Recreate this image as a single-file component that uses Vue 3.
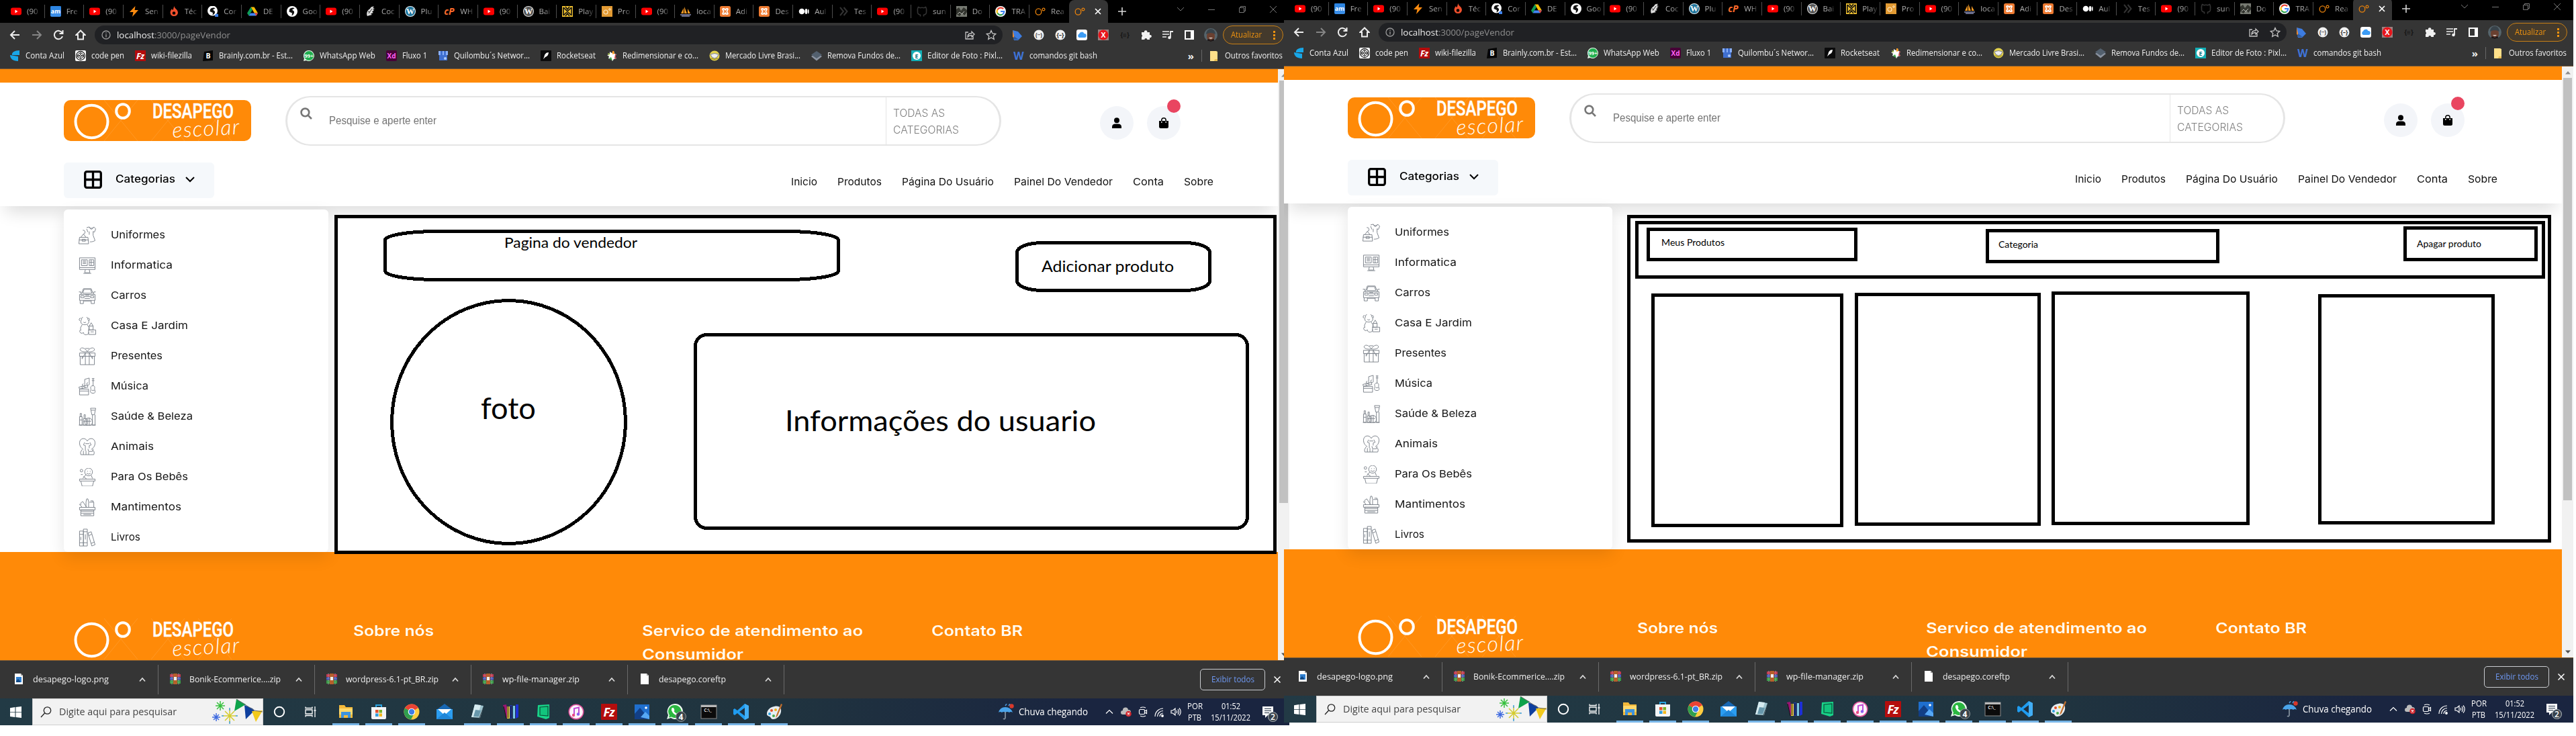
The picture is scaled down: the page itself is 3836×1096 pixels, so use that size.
<script setup>
// Stretches or narrows a label so that it fills a given width in pixels.
const vFit = {
  mounted(el, { value }) {
    const w = el.getBoundingClientRect().width
    el.style.transform = `scaleX(${value / w})`
    el.style.transformOrigin = '0 50%'
    el.style.marginRight = value - w + 'px'
  },
}

const t = (s, x, y, size, fill, extra = '') =>
  `<text x="${x}" y="${y}" font-size="${size}" fill="${fill}" text-anchor="middle" font-family="Open Sans, sans-serif" font-weight="700" ${extra}>${s}</text>`

// 16 x 16 glyphs for tabs, bookmarks and extensions
const small = {
  yt: '<rect y="2.500" width="16" height="11" rx="3" fill="#f00"/><path d="M6.500 5.500v5l4-2.500z" fill="#fff"/>',
  am: '<rect width="16" height="16" rx="2" fill="#3a8ee8"/><path d="M0 0h16v4l-16 9z" fill="#1f7bdb" opacity=".5"/>' + t('am', 8, 11, 9, '#fff'),
  bolt: '<path d="M9.500 0L1 9h5.500L5 16l9-10H8.500z" fill="#ff8c10"/>',
  flame: '<path d="M8.500 0c0 4 5.500 4.500 5.500 10a5.800 5.800 0 0 1-11.500 0c0-3 1.500-4.500 2.500-6 .3 1.200.8 1.800 1.500 2C7.500 4 7.500 2 8.500 0z" fill="#f0502d"/><circle cx="8" cy="10.500" r="2.300" fill="#000"/>',
  globe: '<circle cx="8" cy="8" r="8" fill="#fff"/><path d="M4 5c2-3 6-3 7.500-1.500L8 5.500l3 2.500c.5 3-1 5-3.500 6.500l.5-4-4.500-2z" fill="#111"/>',
  globeDot: '<circle cx="7.500" cy="7" r="7.500" fill="#fff"/><path d="M4 5c2-3 6-3 7.500-1.500L8 5.500l3 2.500c.5 3-1 4-3.500 5.500l.5-3.500-4.500-2z" fill="#111"/><circle cx="14" cy="14.500" r="3" fill="#3f82ec"/>',
  drive: '<path d="M5.500 1.500h5l5.500 9h-5.200z" fill="#fbbc04"/><path d="M5.500 1.500L0 10.500l2.500 4L8 5.600z" fill="#0f9d58"/><path d="M2.500 14.500h11l2.500-4H5z" fill="#4285f4"/><path d="M13.500 14.500l2.500-4h-5z" fill="#ea4335"/>',
  feather: '<path d="M3 15C1 11 3 6 7 4c1-3 4-4 6-3l-2 2 3 1-3 1.500 2 1-3 2 2 1.500-4 1.500 2 1.500-4 1z" fill="#ddd"/><path d="M5 11l5-7M4 8l3 1" stroke="#333"/>',
  wpBlue: '<circle cx="8" cy="8" r="8" fill="#e8f4fa"/><circle cx="8" cy="8" r="7" fill="#21759b"/>' + t('W', 8, 12.3, 12, '#fff', 'style="font-family:Liberation Serif,serif"'),
  wpGrey: '<circle cx="8" cy="8" r="8" fill="#e6e6e6"/><circle cx="8" cy="8" r="7" fill="#555"/>' + t('W', 8, 12.3, 12, '#fff', 'style="font-family:Liberation Serif,serif"'),
  cp: t('cP', 8, 13, 14, '#ff6c2c', 'font-style="italic"'),
  play: '<rect width="16" height="16" fill="#f2c230"/><path d="M2 2l12 12M14 2L2 14M2 2v12M14 2v12M5 1l3 4 3-4M5 15l3-4 3 4" stroke="#111" stroke-width="1.600" fill="none"/>',
  proBox: '<rect width="16" height="16" fill="#e29a33"/><circle cx="6" cy="9" r="3" stroke="#ffe7c2" stroke-width="1.200" fill="none"/><circle cx="12" cy="5" r="1.300" stroke="#ffe7c2" fill="none"/>',
  pma: '<path d="M1 11L5 3v8zM6 11V1l4 10zM11 11V4l4 7z" fill="#f59a23"/><path d="M0 13h16M2 15h12" stroke="#8b8fb5" stroke-width="1.500"/>',
  xampp: '<rect width="16" height="16" rx="2.500" fill="#ee7b32"/><path d="M4 4.500c0-1 3-1 4 1 1-2 4-2 4-1s-1.500 1.500-1.500 3.500S12 10.500 12 11.500s-3 1-4-1c-1 2-4 2-4 1s1.500-1.500 1.500-3.500S4 5.500 4 4.500z" stroke="#fff" stroke-width="1.700" fill="none"/>',
  medium: '<ellipse cx="5" cy="8" rx="4.300" ry="4.300" fill="#fff"/><ellipse cx="11.500" cy="8" rx="1.900" ry="4" fill="#fff"/><ellipse cx="14.800" cy="8" rx=".8" ry="3.600" fill="#fff"/>',
  chev: '<path d="M3 2l5 6-5 6M8.500 2l5 6-5 6" stroke="#333" stroke-width="2" fill="none"/>',
  github: '<path d="M5.500 15.500c0-1 .2-2-.2-2.500C2.500 13 1 11 1.500 7.500 1 5 2 2 2.500 1.500L5 2.700q3-.8 6 0l2.500-1.200C14 2 15 5 14.500 7.500c.5 3.500-1 5.500-3.800 5.500-.4.500-.2 1.500-.2 2.500" stroke="#333" stroke-width="1.600" fill="none"/>',
  photo: '<rect width="16" height="16" fill="#777a72"/><path d="M0 5l4-3 3 5 4-5 5 4v3l-4 5-3-4-4 5-5-3z" fill="#33352f"/><path d="M2 12l3-3 3 3 4-4" stroke="#b9bbb4" fill="none"/>',
  google: '<circle cx="8" cy="8" r="8" fill="#fff"/><path d="M12.200 4.300A5.500 5.500 0 0 0 3.300 5.500" stroke="#ea4335" stroke-width="2.200" fill="none"/><path d="M3.300 5.300a5.500 5.500 0 0 0 0 5.400" stroke="#fbbc04" stroke-width="2.200" fill="none"/><path d="M3.300 10.500A5.400 5.400 0 0 0 11 12.400" stroke="#34a853" stroke-width="2.200" fill="none"/><path d="M8 8h5.300c0 2-.9 3.500-2.300 4.500" stroke="#4285f4" stroke-width="2.200" fill="none"/>',
  rings: '<ellipse cx="5.500" cy="8.500" rx="4.300" ry="4.600" stroke="#e8820c" stroke-width="1.300" fill="none"/><circle cx="13" cy="5" r="1.900" stroke="#e8820c" stroke-width="1.200" fill="none"/>',
  azul: '<path d="M15 0v7H4C3 3 8 0 15 0zM1 7c0 5 4 9 12 9V9z" fill="#18a7e8"/>',
  codepen: '<rect width="16" height="16" rx="2" fill="#fff"/><circle cx="8" cy="8" r="6.500" fill="none" stroke="#222" stroke-width="1.300"/><path d="M8 3.500l4.500 3v3l-4.500 3-4.500-3v-3zM3.500 6.500l4.500 3 4.500-3M3.500 9.500l4.500-3 4.500 3M8 3.500v3M8 9.500v3" fill="none" stroke="#222"/>',
  fz: '<rect width="16" height="16" fill="#b30b0b"/>' + t('Fz', 8, 13, 12.5, '#fff', 'font-style="italic" textLength="12"'),
  brainly: '<path d="M2 2l13-2v15L0 16z" fill="#050505"/>' + t('B', 8, 12, 10.5, '#fff'),
  wa: '<path d="M8 0a8 8 0 1 1-4 15L0 16l1-4A8 8 0 0 1 8 0z" fill="#e4f5e8"/><circle cx="8" cy="8" r="6.900" fill="#1fae4e"/>' + t('99+', 8, 11, 7.5, '#fff'),
  xd: '<rect width="16" height="16" rx="2" fill="#470137"/>' + t('Xd', 8, 12, 10, '#ff61f6'),
  store: '<path d="M1 1h14v6H1z" fill="#8ab0f8"/><path d="M4 1h3v6H4zM9 1h3v6H9zM2 7h12v8H2z" fill="#3f6fd0"/><circle cx="11" cy="12" r="2" fill="#aecbfa"/>',
  rocket: '<rect width="16" height="16" rx="1" fill="#0a0a0b"/><path d="M12 3c-4 0-6 3-6.500 6L4 13l3-3c3-1 4.500-3 5-7z" fill="#fff"/>',
  pin: '<path d="M5 2l3 2 3-3 1 4 3 1-2 3 2 3-4 1-2 3-2-3-4-1 1-3-3-2 4-1z" fill="#fff"/><path d="M9 1l2 0 1 4-3 1z" fill="#ff9a1f"/><path d="M13 6l2 0-2 3 2 3-3 0z" fill="#da3640"/><path d="M4 12l3-2 2 5-2-1z" fill="#3bab46"/><path d="M2 4l3 1-1 3z" fill="#b7d94a"/>',
  ml: '<circle cx="8" cy="8" r="7.500" fill="#e2d14d"/><path d="M2 6q6-3 12 0l-2 4-4 2-4-2z" fill="#eee" stroke="#5f6688" stroke-width=".8"/><path d="M3 12q5 3 10 0" stroke="#8b7d15" fill="none"/>',
  layers: '<path d="M0 9l8 6.500L16 9l-3-2H3z" fill="#8b93a0"/><path d="M8 1l8 5.500L8 12 0 6.500z" fill="#53606e"/>',
  pixlr: '<rect width="16" height="16" fill="#13aeb5"/><circle cx="8" cy="8" r="6" fill="#fff"/>' + t('E', 8, 11.5, 9, '#0c7479'),
  word: t('W', 8, 14, 16, '#3f74d8'),
  folder: '<path d="M2 1h9l2 1v14H2z" fill="#ffe08a"/><path d="M9 13h4v3H8z" fill="#e8bd53"/>',
  tag: '<path d="M1 1l8 2 6 7-6 6H3z" fill="#3d7ce0"/><path d="M1 1l3 12-3-2z" fill="#ef8a2a"/><path d="M3 10l-1 5h8z" fill="#315c9e"/>',
  json: '<circle cx="8" cy="8" r="7.500" fill="#f2f2f2"/>' + t('(··)', 8, 11, 8, '#333'),
  json2: '<circle cx="8" cy="8" r="7.500" fill="#f2f2f2"/>' + t('{–}', 8, 11, 8.5, '#222'),
  cloud: '<rect width="16" height="16" rx="3" fill="#fff"/><path d="M4 12a3 3 0 0 1 0-5.500A4 4 0 0 1 11.500 6 3 3 0 0 1 12 12z" fill="#3c9cf5"/>',
  redx: '<rect width="16" height="16" fill="#9b8080"/><circle cx="8" cy="8" r="7.500" fill="#e8151b"/>' + t('X', 8, 12, 10.5, '#fff'),
  braces: t('{≡}', 8, 12, 10, '#151515'),
  puzzle: '<path d="M1 4h4a2.200 2.200 0 1 1 4.300 0H13v4a2.200 2.200 0 1 1 0 4.200V15H9.300a2 2 0 0 0-4 0H1v-4a2 2 0 0 0 0-3.500z" fill="#f1f1f1"/>',
  queue: '<path d="M0 3h10M0 7h10M0 11h6" stroke="#eee" stroke-width="1.700"/><path d="M12 12V3h4" stroke="#eee" stroke-width="1.800" fill="none"/><circle cx="10.500" cy="12" r="2.300" fill="#eee"/>',
  panel: '<rect x="2" y="2" width="12" height="12" fill="none" stroke="#fff" stroke-width="2"/><path d="M10 2h4v12h-4z" fill="#fff"/>',
}

// 24 x 24 taskbar glyphs
const large = {
  explorer: '<path d="M2 2h8l2 3h10v16H2z" fill="#f3b93a"/><path d="M2 7h20v9H2z" fill="#ffd86b"/><path d="M5 12h14v9h-4v-4H9v4H5z" fill="#3d93dd"/>',
  shop: '<path d="M8 6V2h8v4" fill="none" stroke="#2aa3e0" stroke-width="2"/><path d="M1 5h22v16q0 2-2 2H3q-2 0-2-2z" fill="#f2f4f6"/><path d="M7 9h4.500v4.500H7z" fill="#e5502a"/><path d="M12.500 9H17v4.500h-4.500z" fill="#7ab52a"/><path d="M7 14.500h4.500V19H7z" fill="#2f9fe0"/><path d="M12.500 14.500H17V19h-4.500z" fill="#f5b81f"/>',
  chrome: '<circle cx="12" cy="12" r="11.500" fill="#ffcd40"/><path d="M12 12L2 6.500A11.500 11.500 0 0 1 22 6z" fill="#ea4335"/><path d="M12 12L2 6.500A11.500 11.500 0 0 0 11 23.400L16 14z" fill="#2f9e4f"/><circle cx="12" cy="12" r="5.300" fill="#fff"/><circle cx="12" cy="12" r="4.200" fill="#3f7de8"/>',
  mail: '<path d="M0 9L12 0l12 9z" fill="#1767b3"/><path d="M0 8h24v15H0z" fill="#2b9df0"/><path d="M2 8h20l-10 9z" fill="#fff"/><path d="M0 23l12-10 12 10z" fill="#1f86d8"/>',
  note: '<path d="M8 1l13 2-5 18L3 20z" fill="#9fc4cf"/><path d="M8 1l9 1-5 17-9 1z" fill="#d6ebf0"/><path d="M9 9l8 1-3 9-8 0z" fill="#6797ab"/><path d="M21 3l-5 18-2 1z" fill="#4a5a62"/>',
  books: '<path d="M1 2l5-1 3 20-3 1z" fill="#9b1574"/><path d="M7 4h4v18H7z" fill="#e7c93b"/><path d="M11 2h4v20h-4z" fill="#223b9c"/><path d="M16 3h3v19h-3z" fill="#7cc8e8"/><path d="M20 1h4v19l-4 2z" fill="#1d2fd8"/><path d="M2 4l4 18M8.500 4v17M13 3v18" stroke="#111" stroke-width="1"/>',
  green: '<path d="M4 2l17-1v20l-5 2-13-4z" fill="#19d389"/><path d="M7 5l12-1v14l-12-1z" fill="#12c47d" stroke="#0a4d38" stroke-width="1.200"/>',
  itunes: '<circle cx="12" cy="12" r="11.500" fill="#e2559e"/><circle cx="12" cy="12" r="10" fill="#fbf3fa"/><path d="M9 17V7l7-1.500V15" stroke="#c24bd4" stroke-width="2" fill="none"/><circle cx="8" cy="17" r="2.200" fill="#ea4a82"/><circle cx="15" cy="15.500" r="2.200" fill="#8a5cf0"/>',
  fz: '<rect width="24" height="24" rx="1" fill="#b40d0d"/>' + t('Fz', 12, 19, 18, '#fff', 'font-style="italic" textLength="17"'),
  photos: '<path d="M1 1h22v22H1z" fill="#1f6fce"/><path d="M1 15l8-9 14 17H1z" fill="#123f86"/><path d="M10 20l7-8 6 6v5z" fill="#56a8f5"/><circle cx="18" cy="6" r="1.800" fill="#fff"/>',
  wa: '<path d="M12 0a11.500 11.500 0 1 1-6 21L0 23l2-6A11.500 11.500 0 0 1 12 0z" fill="#eefaf1"/><path d="M12 2a9.500 9.500 0 1 1-5 17.500L3 20.500 4 17A9.500 9.500 0 0 1 12 2z" fill="#2bb741"/><path d="M8 6l2 0 1.500 3.500-1 1.500q1.500 2.500 4 3.500l1.500-1.500 3 1.500q0 3-3 3Q10 17 7 10q-.5-3 1-4z" fill="#fff"/><circle cx="21" cy="19" r="7.500" fill="#3b454b" stroke="#8b9398"/>' + t('4', 21, 23.5, 12, '#fff'),
  cmd: '<rect x="1" y="2" width="23" height="20" fill="#0b0b0b" stroke="#8a8a8a"/><path d="M1 2h23v3H1z" fill="#b9b9b9"/>' + t('C:\\_', 11, 12, 6.5, '#ddd'),
  vscode: '<path d="M17 0l6 3v18l-6 3-11-10-4 3-2-1.500V8.500L2 7l4 3z" fill="#1f9cf0"/><path d="M17 6v12l-8-6z" fill="#1e2f3f"/><path d="M17 0l6 3v18l-6 3z" fill="#42aef5"/>',
  paint: '<path d="M12 4c8-2 11 3 10 8-1 6-6 11-12 11-3 0-3-3-5-4s-4-1-4-4C1 9 6 5 12 4z" fill="#e6edf2"/><circle cx="8" cy="10" r="2" fill="#e5502a"/><circle cx="5" cy="15" r="2" fill="#2c9fe0"/><circle cx="14" cy="9" r="2" fill="#f1b31d"/><circle cx="11" cy="18" r="2" fill="#47a94a"/><path d="M22 0l2 1-7 17-3 3 1-4z" fill="#c2702e"/>',
}

// 28 x 28 line drawings of the category list
const cats = [
  { n: 'Uniformes', w: 81, d: 'M13 2l4-1 2 2h3l2-2 3 3-2 5-2-1v6l3 8c-3 2-6 2-8 2M15 9l-2-5M17 8v5M17 1q3 7 7 0M7 6a3 3 0 1 1 1 6L4 17M8 12l4 5M2 17h13l1 10H1zM1 21h15M6 20h5v3H6z' },
  { n: 'Informatica', w: 92, d: 'M2 2h24v18H2zM2 17h24M11 20l-1 5h8l-1-5M8 26h12M5 5h9v9H5zM7 7h5M7 9h5M7 11h5M17 5h7v9h-7zM20 5v9M17 9h7' },
  { n: 'Carros', w: 53, d: 'M5 11l3-8h12l3 8M7 10l2-6h10l2 6zM2 12h24v9H2zM1 8h3v3M27 8h-3v3M4 14h5v3H4zM19 14h5v3h-5zM10 15h8M10 18h8M3 21v5h5v-5M20 21v5h5v-5M8 22h12M11 13h6' },
  { n: 'Casa E Jardim', w: 115, d: 'M5 4a4 4 0 1 1 10 0c3 4 1 8-5 8s-7-4-5-8M4 2a2 2 0 1 0-1 4M15 2a2 2 0 1 1 1 4M8 8q2 2 4 0M6 12q-4 5-2 9M14 12q4 4 2 9M3 20a3 3 0 1 0 5 4 3 3 0 1 0 8-1M20 9l3 5h-6zM17 14h6v6h-6zM16 20h11v7H16zM19 23h5' },
  { n: 'Presentes', w: 77, d: 'M2 9h24v5H2zM3 14h22v13H3zM11 9v18M17 9v18M14 7C10 0 4 0 3 3s5 5 11 4c6 1 12-1 11-4s-7-3-11 4M11 9l-5 9 0-4M17 9l5 9 0-4M11 2h6' },
  { n: 'Música', w: 56, d: 'M10 11V3l7-2v8M10 11a2 2 0 1 1-2-1M17 9a2 2 0 1 1-2-1M23 1v12M21 2h4M21 5h4M21 13c-4 3 0 4-2 8s9 5 7 0 1-6-2-8zM21 20h4M2 18h14v9H2zM2 18l-1-3 13-3 1 3zM5 14l2 3M9 13l2 3M2 21h14' },
  { n: 'Saúde & Beleza', w: 122, d: 'M2 14h4v13H2zM3 14V9h2v5M8 17h5v10H8zM9 17v-6h2v6M19 1h8l-2 10h-4zM20 4h6M22 11v16h4V11M10 22a6 6 0 1 1 12 0 6 6 0 1 1-12 0M12 21h8M14 17v9M17 16v11M1 27h26M2 19h4M8 21h5' },
  { n: 'Animais', w: 64, d: 'M14 5C11-1 2 0 2 8c0 5 3 8 6 10M14 5c3-6 12-5 12 3 0 5-3 8-6 10M10 7l-2 4 3 1v8M18 7l2 4-3 1v4M11 9h6M6 18q-4 5-2 8h20q2-5-2-7M15 17l1 4h6l1-4M8 20v6M12 20v6M16 22v4' },
  { n: 'Para Os Bebês', w: 115, d: 'M10 6a6 6 0 1 1 12 0 6 6 0 1 1-12 0M13 8q3 3 6 0M14 5h1M18 5h1M12 10l-5 6M20 11l2 5M3 4a2 2 0 1 1 4 0 2 2 0 1 1-4 0M4 10h3M2 17h24v3H2zM4 20l2 8h16l2-8M8 13l5 4' },
  { n: 'Mantimentos', w: 105, d: 'M2 14h24v4H2zM4 18h20v9H4zM4 20h20M4 23h20M12 14V6l1-5h2l1 5v8M17 6h7v8M19 4h4v2M3 8l4-3 6 9M2 10l3-1M6 14l-4-5M8 25h12' },
  { n: 'Livros', w: 44, d: 'M2 4h6v23H2zM8 1h6v26H8zM15 7l5-2 6 20-5 2zM2 9h6M2 22h6M8 5h6M8 22h6M16 11l5-2M20 23l5-2M4 13v5M11 9v8' },
]

const tabs = [
  ['yt', '(90'], ['am', 'Fre'], ['yt', '(90'], ['bolt', 'Sen'], ['flame', 'Téc'], ['globeDot', 'Cor'], ['drive', 'DE'],
  ['globe', 'Goo'], ['yt', '(90'], ['feather', 'Coc'], ['wpBlue', 'Plu'], ['cp', 'WH'], ['yt', '(90'], ['wpGrey', 'Bai'],
  ['play', 'Play'], ['proBox', 'Pro'], ['yt', '(90'], ['pma', 'loca'], ['xampp', 'Adi'], ['xampp', 'Des'], ['medium', 'Aul'],
  ['chev', 'Tes'], ['yt', '(90'], ['github', 'sun'], ['photo', 'Do'], ['google', 'TRA'], ['rings', 'Rea'],
]
const marks = [
  ['azul', 'Conta Azul', 58], ['codepen', 'code pen', 49], ['fz', 'wiki-filezilla', 61], ['brainly', 'Brainly.com.br - Est...', 110],
  ['wa', 'WhatsApp Web', 83], ['xd', 'Fluxo 1', 37], ['store', 'Quilombu´s Networ...', 113], ['rocket', 'Rocketseat', 58],
  ['pin', 'Redimensionar e co...', 113], ['ml', 'Mercado Livre Brasi...', 112], ['layers', 'Remova Fundos de...', 109],
  ['pixlr', 'Editor de Foto : Pixl...', 112], ['word', 'comandos git bash', 101],
]
const exts = ['tag', 'json', 'json2', 'cloud', 'redx', 'braces', 'puzzle', 'queue', 'panel']
const nav = [['Inicio', 39], ['Produtos', 66], ['Página Do Usuário', 137], ['Painel Do Vendedor', 147], ['Conta', 46], ['Sobre', 44]]
const files = [
  ['img', 'desapego-logo.png', 113], ['rar', 'Bonik-Ecommerice....zip', 136], ['rar', 'wordpress-6.1-pt_BR.zip', 138],
  ['rar', 'wp-file-manager.zip', 115], ['doc', 'desapego.coreftp', 100],
]
const apps = ['explorer', 'shop', 'chrome', 'mail', 'note', 'books', 'green', 'itunes', 'fz', 'photos', 'wa', 'cmd', 'vscode', 'paint']

// Wireframe shapes: x, y, width, height, rx, ry
const screens = [
  {
    boxes: [[498, 320, 1403, 505, 0, 0], [571, 342, 680, 77, 78, 13], [581, 445, 353, 367, 176, 183], [1512, 359, 292, 76, 38, 14], [1033, 496, 827, 293, 17, 17]],
    labels: [['Pagina do vendedor', 751, 369, 198, 20.5], ['foto', 716, 624, 82, 44], ['Adicionar produto', 1551, 405, 197, 23.5], ['Informações do usuario', 1169, 642, 463, 42]],
  },
  {
    boxes: [[511, 324, 1376, 488, 0, 0], [523, 333, 1355, 86, 0, 0], [540, 343, 314, 50, 0, 0], [1045, 345, 348, 51, 0, 0], [1667, 341, 200, 52, 0, 0],
      [547, 441, 286, 348, 0, 0], [850, 440, 277, 347, 0, 0], [1143, 438, 295, 348, 0, 0], [1540, 442, 263, 343, 0, 0]],
    labels: [['Meus Produtos', 562, 370, 94, 14], ['Categoria', 1064, 373, 59, 14], ['Apagar produto', 1687, 372, 96, 14]],
  },
]
</script>

<template>
  <div class="desk">
    <section v-for="(s, k) in screens" :key="k" class="shot" :class="{ second: k === 1 }">
      <div class="frame">
        <div class="tabs">
          <div v-for="(b, i) in tabs" :key="i" class="tab" :class="{ last: i === tabs.length - 1 }">
            <svg class="i16" viewBox="0 0 16 16" v-html="small[b[0]]" /><span>{{ b[1] }}</span>
          </div>
          <div class="tab on">
            <svg class="i16" viewBox="0 0 16 16" v-html="small.rings" />
            <svg class="x" viewBox="0 0 10 10"><path d="M1 1l8 8M9 1L1 9" stroke="#fff" stroke-width="1.700" /></svg>
          </div>
          <svg class="plus" viewBox="0 0 12 12"><path d="M6 0v12M0 6h12" stroke="#d8d8d8" stroke-width="1.600" /></svg>
          <div class="ctl">
            <svg viewBox="0 0 12 12"><path d="M1 3l5 5 5-5" /></svg>
            <svg viewBox="0 0 12 12"><path d="M1 6.500h10" /></svg>
            <svg viewBox="0 0 12 12"><path d="M1.500 3.500h7v7h-7zM3.500 3.500v-2h7v7h-2" /></svg>
            <svg viewBox="0 0 12 12"><path d="M1 1l10 10M11 1L1 11" /></svg>
          </div>
        </div>

        <div class="bar">
          <div class="go">
            <svg viewBox="0 0 16 16"><path d="M15 8H2M8 2L2 8l6 6" /></svg>
            <svg class="dim" viewBox="0 0 16 16"><path d="M1 8h13M8 2l6 6-6 6" /></svg>
            <svg viewBox="0 0 16 16"><path d="M13.500 5A6.200 6.200 0 1 0 14 10M14.500 1v5h-5" /></svg>
            <svg viewBox="0 0 16 16"><path d="M8 1.500L1.500 8H4v6.500h8V8h2.500z" /></svg>
          </div>
          <div class="omni">
            <svg class="info" viewBox="0 0 14 14"><circle cx="7" cy="7" r="6" /><path d="M7 6v4.500M7 3.300v1.500" /></svg>
            <span v-fit="56" class="host">localhost</span><span v-fit="113" class="path">:3000/pageVendor</span>
            <svg class="share" viewBox="0 0 16 16"><path d="M6 4H2v10h11v-4M5 11c0-4 3-5.500 6-5.500V3l4 4-4 4V8.500C8.500 8.500 6.500 9 5 11z" /></svg>
            <svg class="star" viewBox="0 0 16 16"><path d="M8 1.500l2 4.500 4.700.5-3.500 3.200 1 4.800L8 12l-4.200 2.500 1-4.800L1.300 6.500 6 6z" /></svg>
          </div>
          <svg v-for="e in exts" :key="e" class="i16 ext" viewBox="0 0 16 16" v-html="small[e]" />
          <svg class="face" viewBox="0 0 20 20"><defs><clipPath :id="'f' + k"><circle cx="10" cy="10" r="10" /></clipPath></defs><g :clip-path="`url(#f${k})`"><rect width="20" height="20" fill="#56646b" /><ellipse cx="10" cy="12" rx="6" ry="8" fill="#6a4030" /><path d="M3 9Q4 1 10 1t7 8q-7-4-14 0z" fill="#39434a" /><path d="M7 14q3 3 6 0z" fill="#e8e0dc" /><path d="M3 20l3-4 4 2 4-2 3 4z" fill="#1d1718" /></g></svg>
          <div class="upd"><span v-fit="46">Atualizar</span><i /></div>
        </div>

        <div class="marks">
          <div v-for="m in marks" :key="m[1]" class="mark"><svg class="i16" viewBox="0 0 16 16" v-html="small[m[0]]" /><span v-fit="m[2]">{{ m[1] }}</span></div>
          <b class="more">»</b>
          <div class="mark other"><svg class="i16" viewBox="0 0 16 16" v-html="small.folder" /><span v-fit="86">Outros favoritos</span></div>
        </div>

        <div class="view">
          <div class="page">
            <div class="stripe" />
            <header>
              <div class="row1">
                <svg class="logo" viewBox="0 0 279 61">
                  <rect width="279" height="61" rx="10" fill="#ff8a08" />
                  <g class="wm"><path d="M60 0l50 61M110 0L60 61M130 0l50 61M180 0l-50 61M200 0l50 61M250 0l-50 61" /></g>
                  <ellipse cx="41.500" cy="32" rx="24" ry="24.300" fill="none" stroke="#fff" stroke-width="4" />
                  <ellipse cx="88" cy="16.500" rx="9.800" ry="10.300" fill="none" stroke="#fff" stroke-width="4" />
                  <text x="132" y="27" class="lt" textLength="121" lengthAdjust="spacingAndGlyphs">DESAPEGO</text>
                  <text x="162" y="56" class="ls" textLength="100" transform="rotate(-3 162 56)">escolar</text>
                </svg>
                <div class="search">
                  <svg class="lens" viewBox="0 0 17 17"><circle cx="7" cy="7" r="5.500" /><path d="M11 11l5 5" /></svg>
                  <span v-fit="160" class="ph">Pesquise e aperte enter</span>
                  <div class="all"><span v-fit="77">TODAS AS</span><span v-fit="98">CATEGORIAS</span></div>
                </div>
                <div class="disc"><svg viewBox="0 0 16 16"><circle cx="8" cy="4.200" r="4" /><path d="M1 16v-2q0-4.500 5-4.500h4q5 0 5 4.500v2z" /></svg></div>
                <div class="disc"><svg viewBox="0 0 16 16"><path d="M1 5h14v8.500q0 2.500-2.500 2.500h-9Q1 16 1 13.500z" /><path d="M4.800 8V4q0-3.200 3.200-3.200T11.200 4v4" fill="none" stroke="#000" stroke-width="1.500" /><path d="M4.800 6v1.800M11.200 6v1.800" stroke="#fff" stroke-width="1.500" /></svg><em /></div>
              </div>
              <div class="row2">
                <div class="cat">
                  <svg viewBox="0 0 27 27"><rect x="1.700" y="1.700" width="23.600" height="23.600" rx="2.500" /><path d="M13.500 2v23M2 13.500h23" /></svg>
                  <span v-fit="89">Categorias</span>
                  <svg class="dn" viewBox="0 0 14 9"><path d="M1 1l6 6 6-6" /></svg>
                </div>
                <nav><span v-for="n in nav" :key="n[0]" v-fit="n[1]">{{ n[0] }}</span></nav>
              </div>
            </header>
            <div class="body">
              <aside>
                <div v-for="c in cats" :key="c.n" class="c"><svg viewBox="0 0 28 28"><path :d="c.d" /></svg><span v-fit="c.w">{{ c.n }}</span></div>
              </aside>
            </div>
            <footer>
              <svg class="logo" viewBox="0 0 279 61">
                <g class="wm"><path d="M60 0l50 61M110 0L60 61M130 0l50 61M180 0l-50 61M200 0l50 61M250 0l-50 61" /></g>
                <ellipse cx="41.500" cy="32" rx="24" ry="24.300" fill="none" stroke="#fff" stroke-width="4" />
                <ellipse cx="88" cy="16.500" rx="9.800" ry="10.300" fill="none" stroke="#fff" stroke-width="4" />
                <text x="132" y="27" class="lt" textLength="121" lengthAdjust="spacingAndGlyphs">DESAPEGO</text>
                <text x="162" y="56" class="ls" textLength="100" transform="rotate(-3 162 56)">escolar</text>
              </svg>
              <h3 class="h1"><span v-fit="120">Sobre nós</span></h3>
              <h3 class="h2"><span v-fit="329">Servico de atendimento ao</span><span v-fit="151">Consumidor</span></h3>
              <h3><span v-fit="136">Contato BR</span></h3>
            </footer>
          </div>
          <div class="scroll">
            <svg viewBox="0 0 8 6"><path d="M0 5.500L4 1l4 4.500z" fill="#8b8b8b" /></svg><div class="thumb" />
            <svg viewBox="0 0 8 6"><path d="M0 .5L4 5 8 .5z" fill="#505050" /></svg>
          </div>
        </div>

        <div class="dl">
          <div v-for="f in files" :key="f[1]" class="file">
            <svg v-if="f[0] === 'rar'" viewBox="0 0 16 16"><path d="M0 1h16v4H0z" fill="#c23a50" /><path d="M0 5.500h16v4H0z" fill="#4d5fc0" /><path d="M0 10h16v5H0z" fill="#3b9a48" /><path d="M5 0h6v16H5z" fill="#b5602b" /><path d="M6 5h4v5H6z" fill="#eee" /><path d="M3 0v16M13 0v16" stroke="#ccc" stroke-dasharray="1 1.500" /></svg>
            <svg v-else viewBox="0 0 16 16"><path d="M2 0h9l3 3v13H2z" fill="#fff" /><path d="M11 0l3 3h-3z" fill="#999" /><path v-if="f[0] === 'img'" d="M4 5h8v8H4z" fill="#2f7fd0" /><path v-if="f[0] === 'img'" d="M4 11l3-3 3 3v2H4z" fill="#124a86" /></svg>
            <span v-fit="f[2]">{{ f[1] }}</span>
            <svg class="up" viewBox="0 0 10 8"><path d="M1 6.500L5 2l4 4.500" /></svg>
          </div>
          <div class="show"><span v-fit="64">Exibir todos</span></div>
          <svg class="cl" viewBox="0 0 10 10"><path d="M.5.500l9 9M9.500.500l-9 9" /></svg>
        </div>

        <div class="task">
          <svg class="win" viewBox="0 0 16 16"><path d="M0 2l7-1v6.700H0zM8 1l8-1v7.700H8zM0 8.500h7V15l-7-1zM8 8.500h8V16l-8-1z" fill="#fff" /></svg>
          <div class="find">
            <svg class="fl" viewBox="0 0 17 17"><circle cx="10.500" cy="6" r="5.200" /><path d="M6.500 10L1 16" /></svg>
            <span v-fit="175">Digite aqui para pesquisar</span>
            <svg class="party" viewBox="0 0 77 38"><g stroke-width="1.500" fill="none"><path d="M14 3v14M7 10h14M9 5l10 10M19 5L9 15" stroke="#37c13e" /><path d="M8 21v12M2 27h12M4 23l8 8M12 23l-8 8" stroke="#3f6be0" /><path d="M28 15v20M18 25h20M21 18l14 14M35 18L21 32" stroke="#d5cc2e" /><path d="M28 13v4M28 33v4M16 25h3M37 25h3" stroke="#3f9ed8" /></g><path d="M38 0l14 8-17 10z" fill="#0da34b" /><path d="M50 9l12 5 3 3-13 13z" fill="#0e3f9e" /><path d="M61 18l16-1-10 17z" fill="#f2c91c" /><path d="M38 0l14 9 13 8 12 2" stroke="#666" fill="none" /></svg>
          </div>
          <svg class="cort" viewBox="0 0 18 18"><circle cx="9" cy="9" r="7.200" fill="none" stroke="#fff" stroke-width="2" /></svg>
          <svg class="tv" viewBox="0 0 18 18"><path d="M1 1.500v2h10v-2M1 16.500v-2h10v2M1 6h10v6H1zM15 1v16M13.500 7h3" fill="none" stroke="#fff" stroke-width="1.300" /></svg>
          <div v-for="a in apps" :key="a" class="app" :class="{ idle: a === 'mail' }"><svg viewBox="0 0 24 24" v-html="large[a]" /></div>
          <div class="tray">
            <svg class="um" viewBox="0 0 24 24"><path d="M1 13Q3 5 11 5t11 8q-3-2-5 0-3-2-6 0-3-2-5 0-3-2-5 0z" fill="#4aa4ea" /><path d="M11 12v9q-1 3-3 1" stroke="#8d9aa5" stroke-width="1.600" fill="none" /><path d="M11 3l2-3M16 3l2-3" stroke="#4a9be0" stroke-width="1.500" /><circle cx="20.500" cy="3.500" r="3.200" fill="#d8392b" /></svg>
            <span v-fit="103" class="ch">Chuva chegando</span>
            <svg class="w12" viewBox="0 0 12 12"><path d="M1 8.500L6 3.500l5 5" /></svg>
            <svg class="w16" viewBox="0 0 16 16"><path d="M3 12a3 3 0 0 1 0-6 4 4 0 0 1 8-1 3.500 3.500 0 0 1 1 7z" fill="#bbb" stroke="none" /><circle cx="11.500" cy="11" r="4.300" fill="#d3282f" stroke="none" /><path d="M10 9.500l3 3M13 9.500l-3 3" stroke="#fff" /></svg>
            <svg class="w16" viewBox="0 0 16 16"><rect x="2.500" y="4.500" width="8" height="7" rx="1.500" /><path d="M10.500 7l3-1.500v5l-3-1.500M4 2q4-2 8 0M4 14q4 2 8 0" /></svg>
            <svg class="w16" viewBox="0 0 16 16"><path d="M2 15A12 12 0 0 1 14 3M5.500 15A8.500 8.500 0 0 1 14 6.500M9 15a5 5 0 0 1 5-5" /><circle cx="13" cy="14" r="1.300" fill="#fff" /></svg>
            <svg class="w16" viewBox="0 0 16 16"><path d="M1 6h2.500L7 3v10L3.500 10H1zM9 6q1.500 2 0 4M11 4q3 4 0 8M13 2.500q4.500 5.500 0 11" /></svg>
            <div class="two lang"><span v-fit="23">POR</span><span v-fit="20">PTB</span></div>
            <div class="two date"><span v-fit="28">01:52</span><span v-fit="59">15/11/2022</span></div>
            <svg class="nt" viewBox="0 0 26 26"><path d="M1 2h16v13H9l-4 4v-4H1z" fill="#fff" stroke="none" /><path d="M4 5.500h10M4 8.500h10M4 11.500h7" stroke="#1b2b3f" /><circle cx="16.500" cy="17.500" r="7" fill="#39424c" stroke="#9aa2a9" /><text x="16.500" y="22" text-anchor="middle" class="nn">2</text></svg>
          </div>
        </div>
      </div>

      <svg class="sketch" width="1920" height="1080">
        <rect v-for="(b, i) in s.boxes" :key="i" :x="b[0] + 2.5" :y="b[1] + 2.5" :width="b[2] - 5" :height="b[3] - 5" :rx="b[4]" :ry="b[5]" />
        <text v-for="l in s.labels" :key="l[0]" :x="l[1]" :y="l[2]" :font-size="l[4]" :textLength="l[3]" lengthAdjust="spacingAndGlyphs">{{ l[0] }}</text>
      </svg>
    </section>
  </div>
</template>

<style>
html, body { margin: 0; background: #fff; overflow: hidden; }
</style>

<style scoped>
.desk { display: flex; align-items: flex-start; width: 3836px; height: 1096px; overflow: hidden; background: #fff; font-family: "Open Sans", "Noto Sans", sans-serif; }
.desk * { box-sizing: border-box; }
.desk span { white-space: nowrap; display: inline-block; }
.desk svg { flex: none; }
.shot { position: relative; flex: none; width: 1920px; height: 1080px; margin-right: -8px; overflow: hidden; }
.shot.second { margin: -4px 0 0; }
.frame { width: 1920px; height: 1080px; display: flex; flex-direction: column; }
.i16 { width: 16px; height: 16px; }

.tabs { height: 34px; background: #000; display: flex; align-items: center; padding-left: 8px; }
.tab { width: 58.67px; flex: none; height: 20px; display: flex; align-items: center; padding-left: 8px; border-right: 1px solid #4d4d4d; }
.tab.last { border-color: transparent; }
.tab span { margin: -1px 0 0 8px; flex: none; font-size: 11.500px; line-height: 18px; color: #aaa; -webkit-mask-image: linear-gradient(90deg, #000 55%, rgba(0, 0, 0, .25)); mask-image: linear-gradient(90deg, #000 55%, rgba(0, 0, 0, .25)); }
.tab.on { height: 34px; background: #353535; border: 0; border-radius: 8px 8px 0 0; }
.tab .x { width: 10px; height: 10px; margin-left: 14px; }
.plus { width: 12px; height: 12px; margin-left: 15px; }
.ctl { display: flex; gap: 34px; margin-left: 75px; margin-top: -6px; }
.ctl svg { width: 12px; height: 12px; fill: none; stroke: #777; }

.bar { height: 36px; background: #353535; display: flex; align-items: center; padding-left: 14px; }
.go { display: flex; gap: 16.500px; width: 127px; }
.go svg { width: 16px; height: 16px; fill: none; stroke: #eee; stroke-width: 2; }
.go .dim { stroke: #858585; }
.omni { width: 1352px; height: 28px; border-radius: 14px; background: #202124; display: flex; align-items: center; font-size: 13px; line-height: 20px; margin-right: 14px; }
.omni svg { fill: none; stroke: #c5c5c5; stroke-width: 1.300; }
.omni .info { width: 14px; height: 14px; margin: 0 9px 0 10px; stroke: #9a9a9a; }
.host { color: #eee; }
.path { color: #8f8f8f; }
.omni .share { width: 16px; height: 16px; margin-left: auto; }
.star { width: 16px; height: 16px; margin: 0 9px 0 16px; }
.ext { margin-right: 16px; }
.face { width: 20px; height: 20px; margin: 0 8px 0 -2px; }
.upd { width: 90px; height: 28px; border: 1.500px solid #c87f16; border-radius: 14px; background: #443a2c; display: flex; align-items: center; padding-left: 11px; color: #f0930f; font-size: 12px; line-height: 18px; }
.upd i { width: 3px; height: 13px; margin-left: 17px; background: radial-gradient(circle at 1.500px 1.500px, #f0930f 1.500px, transparent 1.800px) 0 0 / 3px 5px; }

.marks { height: 33px; background: #353535; display: flex; align-items: center; gap: 16px; padding: 0 0 6px 14px; border-bottom: 1px solid #7b5a36; font-size: 12.500px; line-height: 18px; color: #f0f0f0; }
.mark { display: flex; align-items: center; gap: 8px; }
.more { margin-left: auto; font-size: 15px; margin-right: -5px; }
.other { border-left: 1px solid #666; padding-left: 10px; margin-right: 10px; }

.view { height: 880px; display: flex; }
.page { width: 1903px; overflow: hidden; display: flex; flex-direction: column; font-family: Inter, "Open Sans", sans-serif; }
.stripe { height: 20px; background: #ff8a08; flex: none; }
header { height: 184px; flex: none; background: #fff; box-shadow: 0 16px 24px -8px rgba(0, 0, 0, .14); position: relative; z-index: 1; padding: 20px 0 0 95px; }
.row1 { display: flex; height: 74px; }
.logo { width: 279px; height: 61px; }
.row1 .logo { margin-top: 6px; }
.wm { stroke: #fff; stroke-opacity: .12; fill: none; }
.lt { font: 500 31px Roboto, sans-serif; fill: #fff; stroke: #fff; stroke-width: .4px; }
.ls { font: italic 300 32px Lato, sans-serif; fill: #fff; }
.search { width: 1066px; height: 74px; margin: 0 147px 0 51px; border: 2px solid #e5e5e5; border-left-width: 3px; border-right-width: 3px; border-radius: 37px; display: flex; }
.lens { width: 18px; height: 18px; margin: 15px 25px 0 19px; fill: none; stroke: #777; stroke-width: 2.500; }
.ph { font: 16px/70px "Liberation Sans", Arial, sans-serif; color: #757575; height: 70px; }
.all { margin-left: auto; width: 169px; border-left: 1px solid #e5e5e5; padding: 11px 0 0 10px; color: #808080; font-size: 15.500px; font-weight: 300; line-height: 25px; display: flex; flex-direction: column; align-items: flex-start; }
.disc { width: 50px; height: 50px; border-radius: 50%; background: #f3f5f9; margin: 15px 20px 0 0; position: relative; display: flex; align-items: center; justify-content: center; }
.disc svg { width: 16px; height: 16px; }
.disc em { position: absolute; width: 20px; height: 20px; border-radius: 50%; background: #e94560; right: 0; top: -10px; }
.row2 { display: flex; align-items: flex-start; margin-top: 25px; }
.cat { width: 224px; height: 53px; border-radius: 6px; background: #f5f8fb; display: flex; align-items: center; padding: 0 0 3px 30px; font-size: 15.500px; font-weight: 450; line-height: 24px; }
.cat svg { width: 27px; height: 27px; margin-right: 20px; fill: none; stroke: #000; stroke-width: 3.300; }
.cat .dn { width: 14px; height: 9px; margin: 1px 0 0 15px; stroke-width: 2; }
nav { display: flex; gap: 30px; margin: 17px 0 0 859px; font-size: 15px; line-height: 24px; color: #111; }
.body { height: 515px; flex: none; padding: 5px 0 0 95px; }
aside { width: 394px; height: 510px; border-radius: 6px; background: #fff; position: relative; z-index: 2; box-shadow: 0 8px 24px rgba(0, 0, 0, .1); padding: 16px 0 0 21px; }
.c { height: 44.970px; display: flex; align-items: center; font-size: 15px; line-height: 24px; color: #151515; }
.c svg { width: 28px; height: 27px; margin-right: 21px; fill: none; stroke: #7d838b; stroke-width: 1; }
footer { height: 161px; flex: none; background: #ff8a08; display: flex; align-items: flex-start; padding: 99px 0 0 95px; color: #fffaf0; }
h3 { margin: 1px 0 0; font-size: 22px; font-weight: 600; line-height: 35px; display: flex; flex-direction: column; align-items: flex-start; }
.h1 { width: 430px; margin-left: 152px; }
.h2 { width: 431px; }
.scroll { width: 17px; background: #f1f1f1; display: flex; flex-direction: column; align-items: center; }
.scroll svg { width: 8px; height: 6px; margin: 6px 0 5px; }
.thumb { width: 13px; height: 629px; background: #c1c1c1; margin-bottom: auto; }

.dl { height: 57px; background: #353535; border-top: 1px solid #7b5a36; display: flex; align-items: center; padding-left: 3px; color: #eee; font-size: 12px; line-height: 18px; }
.file { width: 233px; height: 44px; border-right: 1px solid #6a6a6a; display: flex; align-items: center; padding-left: 17px; }
.file > svg { width: 16px; height: 16px; margin: -2px 13px 0 0; }
.file > .up { width: 10px; height: 8px; margin: 0 18px 0 auto; fill: none; stroke: #ddd; stroke-width: 1.700; }
.file > span { flex: none; }
.show { margin-left: auto; width: 97px; height: 32px; margin-right: 13px; border: 1px solid #c9ccd0; border-radius: 5px; color: #6e98f2; display: flex; align-items: center; justify-content: center; }
.cl { width: 10px; height: 10px; margin-right: 13px; stroke: #fff; stroke-width: 1.500; }

.task { height: 40px; background: linear-gradient(90deg, #223a45 0%, #20343f 60%, #1a2540 84%, #1a2540 100%); display: flex; align-items: center; color: #fff; }
.win { width: 17px; height: 17px; margin: 0 16px 0 15px; }
.find { width: 344px; height: 40px; background: #f2f2f2; border: 1px solid #cfcfcf; display: flex; align-items: center; padding-left: 11px; color: #444; font-size: 14.500px; line-height: 22px; }
.fl { width: 17px; height: 17px; fill: none; stroke: #222; stroke-width: 1.300; margin-right: 11px; }
.party { width: 77px; height: 38px; margin-left: auto; }
.cort { width: 18px; height: 18px; margin: 0 29px 0 15px; }
.tv { width: 18px; height: 18px; margin-right: 18px; }
.app { width: 40px; height: 40px; margin: 0 4.550px; border-bottom: 3px solid #76b4e6; display: flex; align-items: center; justify-content: center; padding-top: 3px; }
.app.idle { border-color: transparent; }
.app svg { width: 24px; height: 24px; overflow: visible; }
.tray { margin-left: auto; display: flex; align-items: center; margin-right: 15px; }
.tray svg { fill: none; stroke: #fff; stroke-width: 1.200; }
.tray .um { width: 24px; height: 24px; margin-right: 7px; stroke: none; }
.ch { font-size: 14px; line-height: 20px; }
.w12 { width: 12px; height: 12px; margin: 0 11px 0 26px; }
.w16 { width: 16px; height: 16px; margin-right: 8.500px; }
.two { font-size: 12px; line-height: 17px; display: flex; flex-direction: column; align-items: center; }
.lang { width: 24px; }
.date { width: 59px; margin: 0 17px 0 12px; }
.nt { width: 26px; height: 26px; margin-top: 5px; }
.nn { font: 600 12px "Open Sans", sans-serif; fill: #fff; stroke: none; }

.sketch { position: absolute; left: 0; top: 0; z-index: 3; pointer-events: none; }
.sketch rect { fill: #fff; stroke: #000; stroke-width: 5; shape-rendering: crispEdges; }
.sketch text { font-family: Lato, "Open Sans", sans-serif; fill: #000; }
</style>
